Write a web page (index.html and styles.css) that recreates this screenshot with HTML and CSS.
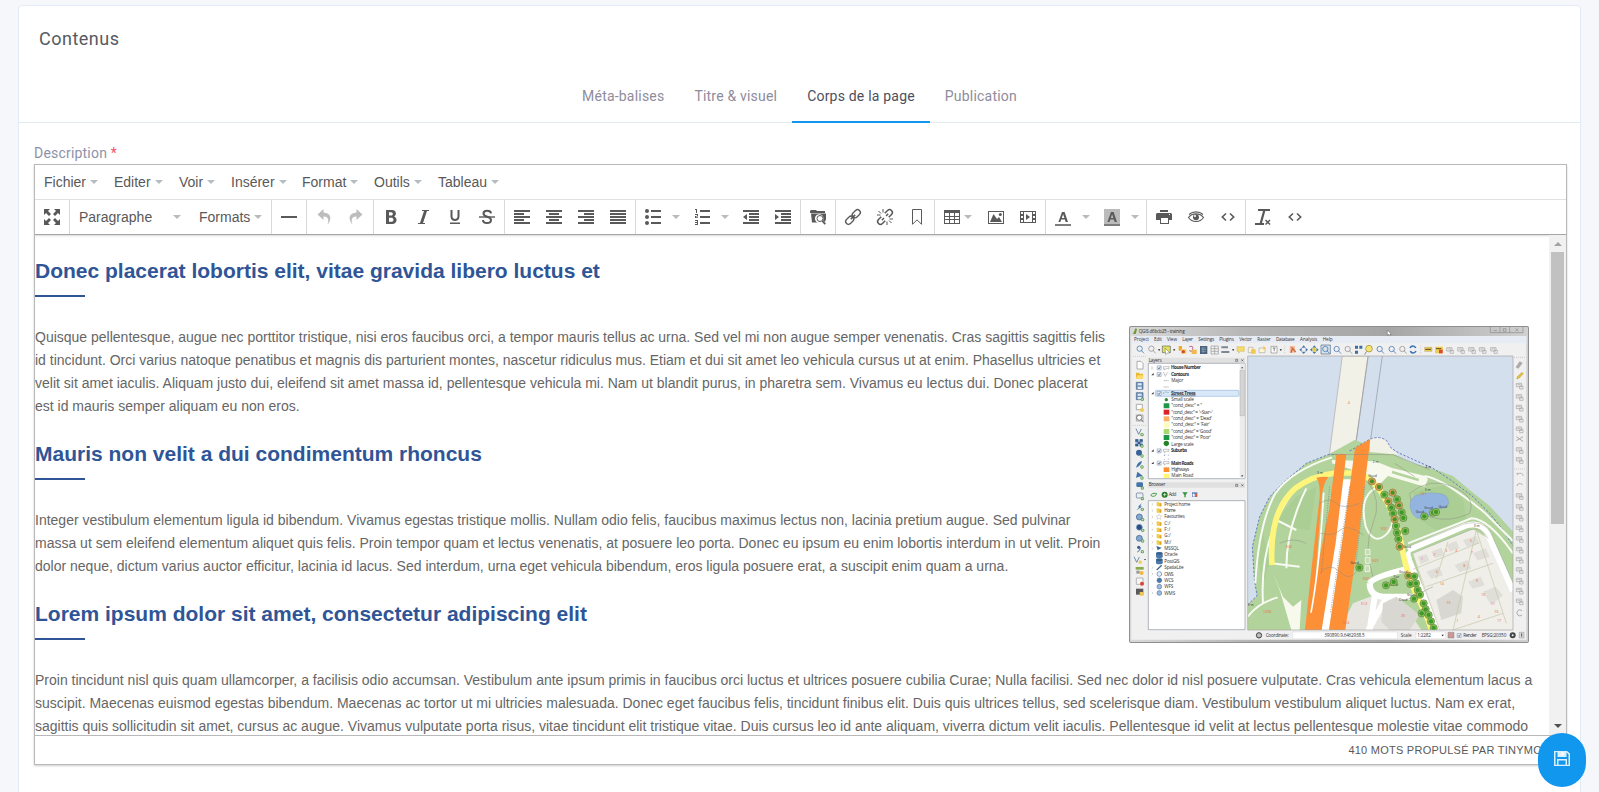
FILE: index.html
```html
<!DOCTYPE html>
<html lang="fr">
<head>
<meta charset="utf-8">
<title>Contenus</title>
<link rel="stylesheet" href="styles.css">
</head>
<body>
<main class="card">
  <header class="card-head">
    <h1 class="card-title">Contenus</h1>
    <nav class="tabs">
      <a class="tab">Méta-balises</a>
      <a class="tab">Titre &amp; visuel</a>
      <a class="tab active">Corps de la page</a>
      <a class="tab">Publication</a>
    </nav>
  </header>
  <section class="field">
    <label class="label">Description <span class="req">*</span></label>
    <div class="editor">
      <div class="menubar">
        <span class="menu m1">Fichier<i class="caret"></i></span>
        <span class="menu m2">Editer<i class="caret"></i></span>
        <span class="menu m3">Voir<i class="caret"></i></span>
        <span class="menu m4">Insérer<i class="caret"></i></span>
        <span class="menu m5">Format<i class="caret"></i></span>
        <span class="menu m6">Outils<i class="caret"></i></span>
        <span class="menu m7">Tableau<i class="caret"></i></span>
      </div>
      <div class="toolbar">
        <div class="group">
          <span class="btn"><svg class="ic" viewBox="0 0 16 16"><path d="M0 0h6L4 2l3 3-2 2-3-3-2 2zM16 0v6l-2-2-3 3-2-2 3-3-2-2zM0 16v-6l2 2 3-3 2 2-3 3 2 2zM16 16h-6l2-2-3-3 2-2 3 3 2-2z"/></svg></span>
        </div>
        <div class="group">
          <span class="listbox para">Paragraphe<i class="caret"></i></span>
          <span class="listbox formats">Formats<i class="caret"></i></span>
        </div>
        <div class="group">
          <span class="btn"><svg class="ic" viewBox="0 0 16 16"><path d="M0 7h16v2H0z"/></svg></span>
        </div>
        <div class="group off">
          <span class="btn"><svg class="ic" viewBox="0 0 16 16"><path d="M7.500 0L1.500 5.500l6 5.500V7.500c4-.3 6 2.500 4 8 5-5.500 3.500-11.700-4-12z"/></svg></span>
          <span class="btn"><svg class="ic" viewBox="0 0 16 16"><path d="M8.500 0l6 5.500-6 5.500V7.500c-4-.3-6 2.500-4 8-5-5.500-3.500-11.700 4-12z"/></svg></span>
        </div>
        <div class="group">
          <span class="btn"><svg class="ic" viewBox="0 0 16 16"><path fill-rule="evenodd" d="M3 1h6c4.500 0 5 5 2.200 6.500C15 9 14 15 9.500 15H3zM6 3.200v3.400h2.300c2 0 2-3.400 0-3.400zM6 8.800v4h2.800c2.200 0 2.200-4 0-4z"/></svg></span>
          <span class="btn"><svg class="ic" viewBox="0 0 16 16"><path d="M14 1v1h-2L8 14h2v1H3v-1h2L9 2H7V1z"/></svg></span>
          <span class="btn"><svg class="ic" viewBox="0 0 16 16"><path d="M3 13.500h10V15H3zM3.500 1h2v6.500c0 3.300 5 3.300 5 0V1h2v6.500c0 6-9 6-9 0z"/></svg></span>
          <span class="btn"><svg class="ic" viewBox="0 0 16 16"><path class="ln" stroke-width="2" d="M12 4.300C11.500 1 4.500 1 4.500 4.500c0 4 7.500 2.500 7.500 6.500 0 4-8 4-8 0"/><path d="M0 7.300h16v1.400H0z"/></svg></span>
        </div>
        <div class="group">
          <span class="btn"><svg class="ic" viewBox="0 0 16 16"><path d="M0 1h16v2H0zM0 4h10v2H0zM0 7h16v2H0zM0 10h10v2H0zM0 13h16v2H0z"/></svg></span>
          <span class="btn"><svg class="ic" viewBox="0 0 16 16"><path d="M0 1h16v2H0zM3 4h10v2H3zM0 7h16v2H0zM3 10h10v2H3zM0 13h16v2H0z"/></svg></span>
          <span class="btn"><svg class="ic" viewBox="0 0 16 16"><path d="M0 1h16v2H0zM6 4h10v2H6zM0 7h16v2H0zM6 10h10v2H6zM0 13h16v2H0z"/></svg></span>
          <span class="btn"><svg class="ic" viewBox="0 0 16 16"><path d="M0 1h16v2H0zM0 4h16v2H0zM0 7h16v2H0zM0 10h16v2H0zM0 13h16v2H0z"/></svg></span>
        </div>
        <div class="group">
          <span class="btn split"><svg class="ic" viewBox="0 0 16 16"><circle cx="2" cy="2" r="2"/><circle cx="2" cy="8" r="2"/><circle cx="2" cy="14" r="2"/><path d="M6 1h10v2H6zM6 7h10v2H6zM6 13h10v2H6z"/></svg><i class="caret"></i></span>
          <span class="btn split"><svg class="ic" viewBox="0 0 16 16"><path d="M6 1h10v2H6zM6 7h10v2H6zM6 13h10v2H6zM2 0h1v4H2V1H1V0zM1 5h3v2.500H2V8.200h2V9H1V7h2V6H1zM1 11h3v5H1v-1h2v-1H1v-1h2v-1H1z"/></svg><i class="caret"></i></span>
          <span class="btn"><svg class="ic" viewBox="0 0 16 16"><path d="M0 1h16v2H0zM6 4h10v2H6zM6 7h10v2H6zM6 10h10v2H6zM0 13h16v2H0zM4 5v6L0 8z"/></svg></span>
          <span class="btn"><svg class="ic" viewBox="0 0 16 16"><path d="M0 1h16v2H0zM6 4h10v2H6zM6 7h10v2H6zM6 10h10v2H6zM0 13h16v2H0zM0 5v6l4-3z"/></svg></span>
        </div>
        <div class="group">
          <span class="btn"><svg class="ic" viewBox="0 0 16 16"><path d="M0 2l1-1h5l1 1h8v2H0zM1 4.500h15V10l-1 3-2-1.500A4.300 4.300 0 1 0 8 13.600H2z"/><circle class="ln" cx="10" cy="9.500" r="3"/><path class="ln" stroke-width="1.800" d="M12.300 12l3 3.200"/></svg></span>
        </div>
        <div class="group">
          <span class="btn"><svg class="ic" viewBox="0 0 16 16"><g class="ln" stroke-width="1.300" transform="rotate(-45 8 8)"><rect x="-1.200" y="5.200" width="9.200" height="5.600" rx="2.800"/><rect x="8" y="5.200" width="9.200" height="5.600" rx="2.800"/><path d="M5 8h6" stroke-width="1.600"/></g></svg></span>
          <span class="btn"><svg class="ic" viewBox="0 0 16 16"><g class="ln" stroke-width="1.500" transform="rotate(-45 8 8)"><path d="M5.500 5.200H1.600a2.800 2.800 0 0 0 0 5.600h3.900M10.500 5.200h3.900a2.800 2.800 0 0 1 0 5.600h-3.900M3.500 8h3M9.500 8h3"/></g><path class="ln" d="M6 0v3.500M1.500 2L4 4.500M0 6h3.500M10 12.500V16M12 11.500l2.500 2.500M12.500 10H16"/></svg></span>
          <span class="btn"><svg class="ic" viewBox="0 0 16 16"><path class="ln" d="M3.500.5h9v14.800L8 10.800l-4.500 4.500z"/></svg></span>
        </div>
        <div class="group">
          <span class="btn drop"><svg class="ic" viewBox="0 0 16 16"><path fill-rule="evenodd" d="M0 1h16v14H0zM1 4v3h4V4zM6 4v3h4V4zM11 4v3h4V4zM1 8v2h4V8zM6 8v2h4V8zM11 8v2h4V8zM1 11v3h4v-3zM6 11v3h4v-3zM11 11v3h4v-3z"/></svg><i class="caret"></i></span>
          <span class="btn"><svg class="ic" viewBox="0 0 16 16"><path fill-rule="evenodd" d="M0 2h16v13H0zM1 3v11h14V3z"/><path d="M2 13l3.500-8L9 10l2-2 3 5z"/><circle cx="12.300" cy="5.500" r="1.500"/></svg></span>
          <span class="btn"><svg class="ic" viewBox="0 0 16 16"><path fill-rule="evenodd" d="M0 2h16v12H0zM1 3v2h2V3zM1 7v2h2V7zM1 11v2h2v-2zM4 3v10h8V3zM13 3v2h2V3zM13 7v2h2V7zM13 11v2h2v-2z"/><path d="M6 5v6l4-3z"/></svg></span>
        </div>
        <div class="group">
          <span class="btn split"><svg class="ic" viewBox="0 0 16 16"><path fill-rule="evenodd" d="M7 3h2.600L13 13h-2.300l-.8-2.400H6.200L5.400 13H3.400zM8.100 5.200L6.800 9h2.600z"/><path class="bar" d="M0 15h16v2H0z"/></svg><i class="caret"></i></span>
          <span class="btn split"><svg class="ic" viewBox="0 0 16 16"><path class="hl" d="M0 0h16v17H0z"/><path fill-rule="evenodd" d="M7 3h2.600L13 13h-2.300l-.8-2.400H6.200L5.400 13H3.400zM8.100 5.200L6.800 9h2.600z"/><path class="bar" d="M0 15h16v2H0z"/></svg><i class="caret"></i></span>
        </div>
        <div class="group">
          <span class="btn"><svg class="ic" viewBox="0 0 16 16"><path fill-rule="evenodd" d="M4 1h8v2H4zM0 5l1-1h14l1 1v6h-3v4H4v-4H0zM5 9v5h7V9zM13 5v1h1V5z"/></svg></span>
          <span class="btn"><svg class="ic" viewBox="0 0 16 16"><path class="ln" stroke-width="1.100" d="M.5 8.500C4 3.700 12 3.700 15.500 8.500 12 13.800 4 13.800.5 8.500zM1 5.500C5 2 11 2 15 5.500"/><circle cx="8" cy="8.300" r="3"/><circle cx="7" cy="7" r="1" fill="#fff"/></svg></span>
          <span class="btn"><svg class="ic" viewBox="0 0 16 16"><path class="ln" stroke-width="1.600" d="M6 4.500L2.300 8 6 11.500M10 4.500L13.700 8 10 11.500"/></svg></span>
        </div>
        <div class="group">
          <span class="btn"><svg class="ic" viewBox="0 0 16 16"><path d="M3 0h12v2H3zM8 2h2.300L7 14H4.700zM0 14h9v2H0z"/><path class="ln" stroke-width="1.500" d="M10.500 11l4.500 4.500M15 11l-4.500 4.500"/></svg></span>
          <span class="btn"><svg class="ic" viewBox="0 0 16 16"><path class="ln" stroke-width="1.600" d="M6 4.500L2.300 8 6 11.500M10 4.500L13.700 8 10 11.500"/></svg></span>
        </div>
      </div>
      <div class="edit-area">
        <article class="doc">
          <div class="row">
            <div class="prose">
              <h2>Donec placerat lobortis elit, vitae gravida libero luctus et</h2>
              <p>Quisque pellentesque, augue nec porttitor tristique, nisi eros faucibus orci, a tempor mauris tellus ac urna. Sed vel mi non augue semper venenatis. Cras sagittis sagittis felis<br>id tincidunt. Orci varius natoque penatibus et magnis dis parturient montes, nascetur ridiculus mus. Etiam et dui sit amet leo vehicula cursus ut at enim. Phasellus ultricies et<br>velit sit amet iaculis. Aliquam justo dui, eleifend sit amet massa id, pellentesque vehicula mi. Nam ut blandit purus, in pharetra sem. Vivamus eu lectus dui. Donec placerat<br>est id mauris semper aliquam eu non eros.</p>
              <h2>Mauris non velit a dui condimentum rhoncus</h2>
              <p>Integer vestibulum elementum ligula id bibendum. Vivamus egestas tristique mollis. Nullam odio felis, faucibus maximus lectus non, lacinia pretium augue. Sed pulvinar<br>massa ut sem eleifend elementum aliquet quis felis. Proin tempor quam et lectus venenatis, at posuere leo porta. Donec eu ipsum eu enim lobortis interdum in ut velit. Proin<br>dolor neque, dictum varius auctor efficitur, lacinia id lacus. Sed interdum, urna eget vehicula bibendum, eros ligula posuere erat, a suscipit enim quam a urna.</p>
              <h2>Lorem ipsum dolor sit amet, consectetur adipiscing elit</h2>
            </div>
            <svg class="shot" viewBox="28 18 1200 951" role="img">
              <defs>
                <linearGradient id="frame" x1="0" y1="0" x2="1" y2="0"><stop offset="0" stop-color="#d9d9d9"/><stop offset=".3" stop-color="#b5b5b5"/><stop offset=".65" stop-color="#a5a5a5"/><stop offset="1" stop-color="#d0d0d0"/></linearGradient>
                <clipPath id="mapclip"><path d="M384 108h796v822H384z"/></clipPath>
                <g id="tree"><circle r="11" fill="#8cc05c" stroke="#4b6e33" stroke-width="1.500"/><circle r="6.500" fill="#3d9a2a"/></g>
                <g id="otree"><circle r="11" fill="#d9a55c" stroke="#7a6330" stroke-width="1.500"/><circle r="6.500" fill="#46922a"/></g>
                <g id="db"><path d="M0 4h20v10H0z" fill="#4b77a9" /><ellipse cx="10" cy="4" rx="10" ry="4" fill="#35618f"/><ellipse cx="10" cy="14" rx="10" ry="4" fill="#4b77a9"/></g>
                <g id="plus"><circle r="5" fill="#4e9a3b"/><path d="M-3 0h6M0-3v6" stroke="#fff" stroke-width="1.500"/></g>
                <g id="mag" fill="none" stroke-width="2.500"><circle r="8"/><path d="M5 5l8 9"/></g>
                <g id="chk"><path d="M.5.500h12v12H.5z" fill="#eef3fa" stroke="#7f8b9c" stroke-width="1.500"/><path d="M3 6l3 4 4-7" fill="none" stroke="#2f4a84" stroke-width="2"/></g>
                <g id="fold"><path d="M0 2h6l2 2h6v11H0z" fill="#f1cb4c"/><path d="M9 6h5v9H9z" fill="#d8a62b"/></g>
                <g id="gt" fill="none" stroke="#a2a2a2" stroke-width="2"><path d="M1 3h16v10H1zM4 7h10M11 11h10v9H11z"/></g>
              </defs>
              <rect x="28" y="18" width="1200" height="951" rx="6" fill="#8f8f8f"/>
              <rect x="31" y="21" width="1194" height="945" rx="4" fill="url(#frame)"/>
              <path d="M35 48h1185v911H35z" fill="#f0f0f0"/>
              <path d="M35 48h1185v22H35z" fill="#e7ebf3"/>
              <path d="M40 42l8-18 4 4-4 14z" fill="#6d9a2f"/>
              <g class="st" font-size="14">
                <text x="57" y="38" textLength="138">QGIS d6bcb25 - training</text>
                <text x="43" y="64" textLength="45">Project</text><text x="103" y="64" textLength="24">Edit</text><text x="142" y="64" textLength="30">View</text><text x="188" y="64" textLength="32">Layer</text><text x="236" y="64" textLength="48">Settings</text><text x="299" y="64" textLength="44">Plugins</text><text x="359" y="64" textLength="38">Vector</text><text x="413" y="64" textLength="40">Raster</text><text x="469" y="64" textLength="56">Database</text><text x="541" y="64" textLength="52">Analysis</text><text x="609" y="64" textLength="30">Help</text>
              </g>
              <g fill="none" stroke="#777" stroke-width="1.500"><path d="M1112 21v17h98V21M1141 21v17M1170 21v17M1122 32h10M1151 26h8v8h-8zM1187 25l9 9M1196 25l-9 9"/></g>
              <path d="M803 31v15l4-3 3 5 3-2-3-4h5z" fill="#fff" stroke="#333"/>
              <!-- tool strip -->
              <g stroke="#4f7fb4"><use href="#mag" x="60" y="86"/><use href="#mag" x="651" y="87"/><use href="#mag" x="780" y="87"/><use href="#mag" x="816" y="87"/></g>
              <g stroke="#999"><use href="#mag" x="95" y="86"/><use href="#mag" x="684" y="87"/><use href="#mag" x="848" y="87"/></g>
              <path d="M604 75h28v27h-28z" fill="#d5e2f0" stroke="#51677f" stroke-width="2"/>
              <g stroke="#4f7fb4"><use href="#mag" x="617" y="87"/></g>
              <path d="M128 78h24v20h-24z" fill="#dfe25b" stroke="#666" stroke-width="2"/><path d="M136 84l14 14-7 1-5 5z" fill="#fff" stroke="#333"/>
              <path d="M177 78h10v14h-10z" fill="#f0a92f"/><path d="M184 88h16v13h-16z" fill="#f6d04b"/><circle cx="191" cy="95" r="5" fill="#d84838"/>
              <path d="M209 80c10-3 14 2 8 7 6 4-2 9-8 5" fill="none" stroke="#b34b8e" stroke-width="3"/><path d="M216 89h15v13h-15z" fill="#f2b948"/>
              <path d="M241 78h22v24h-22z" fill="#49617c"/><path d="M245 84h14M245 89h14M245 94h14M250 82v18" stroke="#dce6f0"/>
              <path d="M274 78h22v24h-22zM274 86h22M274 94h22M285 78v24" fill="none" stroke="#999" stroke-width="2"/>
              <path d="M305 82h20M305 96h24" stroke="#7b8794" stroke-width="6"/>
              <path d="M352 80h22v14h-12l-5 6v-6h-5z" fill="#f7db68" stroke="#b99a33"/>
              <path d="M386 82h14v16h-14zM418 84h18v14h-18z" fill="#fff5d5" stroke="#aaa" stroke-width="2"/><path d="M394 88h14v13h-14zM431 78l8 6-8 6z" fill="#f3c653"/>
              <path d="M454 79h18v20h-18z" fill="#fff" stroke="#888" stroke-width="2"/><path d="M459 84h9M463.500 84v10" stroke="#555" stroke-width="2"/>
              <path d="M115 88h7l-3.500 5zM160 88h7l-3.500 5zM337 88h7l-3.500 5zM480 88h7l-3.500 5z" fill="#222"/>
              <path d="M510 78h16v20h-16z" fill="#f7b99b"/><path d="M516 82l12 14M514 98l4-12" stroke="#c4693e" stroke-width="4"/>
              <path d="M552 76l6 7h-12zM552 102l6-7h-12zM539 89l7-6v12zM565 89l-7-6v12z" fill="#4777a8"/>
              <path d="M584 76l6 7h-12zM584 102l6-7h-12zM571 89l7-6v12zM597 89l-7-6v12z" fill="#4777a8"/><path d="M584 82l7 7-7 7-7-7z" fill="#e8c934"/>
              <path d="M706 77h9v9h-9zM719 77h9v9h-9zM706 92h9v9h-9z" fill="#3d6c9f"/><circle cx="748" cy="86" r="10" fill="#f5e56d" stroke="#8b8445" stroke-width="2"/><path d="M740 95l-5 9" stroke="#888" stroke-width="3"/>
              <path d="M871 84c4-8 14-8 17 0M889 93c-4 8-14 8-17 0" fill="none" stroke="#3673b6" stroke-width="5"/>
              <path d="M495 76v26M903 76v26" stroke="#c8c8c8" stroke-width="3" stroke-dasharray="2 3"/>
              <path d="M915 82h22v12h-22z" fill="#edc94d" stroke="#9e8944"/><path d="M946 80h24v20h-24z" fill="#f1cf55"/><path d="M958 89h11v11h-11z" fill="#dd4638"/><path d="M917 88h17M949 86h16" stroke="#5b4b1b" stroke-width="3"/>
              <use href="#gt" x="980" y="80"/><use href="#gt" x="1013" y="80"/><use href="#gt" x="1046" y="80"/><use href="#gt" x="1078" y="80"/><use href="#gt" x="1112" y="80"/>
              <!-- left tools -->
              <path d="M40 109h38M40 316h38M1184 112h32M1184 447h32" stroke="#b8b8b8" stroke-width="3" stroke-dasharray="2 4"/>
              <path d="M52 124h12l6 6v17H52z" fill="#fff" stroke="#888" stroke-width="2"/><path d="M49 158h8l3 3h10v15H49z" fill="#eab833"/><path d="M53 166h20l-4 10H49z" fill="#ffdc6c"/>
              <path d="M50 187h20v21H50zM50 218h20v21H50z" fill="#6d93bd" stroke="#47678d" stroke-width="2"/><path d="M54 190h12v6H54zM54 200h12v7H54zM54 221h12v6H54zM54 231h12v7H54z" fill="#e2ebf5"/>
              <path d="M50 253h18v16H50zM50 285h20v18H50z" fill="#fff" stroke="#888" stroke-width="2"/><circle cx="67" cy="270" r="6" fill="#f0ca52"/><g stroke="#666"><use href="#mag" x="59" y="293"/></g>
              <path d="M49 326l8 17 8-16" fill="none" stroke="#557799" stroke-width="2.500"/>
              <path d="M47 358h8v7h-8zM61 358h8v7h-8zM54 365h8v7h-8zM47 372h8v7h-8zM61 372h8v7h-8z" fill="#1c3c6e"/><path d="M47 358h22v21H47z" fill="#4977ab" opacity=".5"/>
              <circle cx="58" cy="398" r="9" fill="#38639a"/><path d="M49 443c3-12 9-18 18-20-2 10-7 16-18 20zM49 473l4-18 16 12z" fill="#3f72a8"/>
              <rect x="50" y="487" width="20" height="14" rx="4" fill="#4474a9"/><rect x="50" y="519" width="20" height="15" rx="3" fill="#eee" stroke="#56769c" stroke-width="2"/>
              <path d="M50 571l9-10-4-1 11-10-4 9 5 1z" fill="#4474a9"/>
              <circle cx="59" cy="591" r="9" fill="#83a8ce" stroke="#385e8c" stroke-width="2"/><circle cx="59" cy="622" r="9" fill="#294f80" stroke="#87a8cd" stroke-width="2"/><circle cx="59" cy="655" r="9" fill="#83a8ce" stroke="#385e8c" stroke-width="2"/>
              <circle cx="57" cy="682" r="5" fill="#38639a"/><path d="M62 683q0 9-9 13" fill="none" stroke="#38639a" stroke-width="3"/>
              <path d="M43 710l8 17 8-16" fill="none" stroke="#557799" stroke-width="2.500"/><path d="M57 722h9v9h-9z" fill="#f0ca52"/><path d="M73 717h6l-3 4z" fill="#222"/>
              <path d="M48 741h24v8H48z" fill="#8aa84c"/><path d="M50 752h10v9H50z" fill="#999"/><circle cx="66" cy="759" r="6" fill="#f0b83d"/>
              <path d="M50 774h20v19H50z" fill="#f6f6f6" stroke="#999" stroke-width="2"/><circle cx="67" cy="791" r="6" fill="#d84438"/>
              <path d="M49 806h22v18H49z" fill="#5a5a5a"/><path d="M60 816h12v11H60z" fill="#efc552"/>
              <use href="#plus" x="68" y="238"/><use href="#plus" x="67" y="344"/><use href="#plus" x="67" y="378"/><use href="#plus" x="67" y="408"/><use href="#plus" x="67" y="441"/><use href="#plus" x="67" y="474"/><use href="#plus" x="68" y="504"/><use href="#plus" x="68" y="536"/><use href="#plus" x="68" y="568"/><use href="#plus" x="69" y="599"/><use href="#plus" x="69" y="631"/><use href="#plus" x="69" y="663"/><use href="#plus" x="68" y="695"/>
              <!-- layers panel -->
              <path d="M86 113h290v16H86zM86 487h290v16H86z" fill="#e0e0e0"/>
              <path d="M86 130h290v346H86zM86 542h290v387H86z" fill="#fff" stroke="#8d949d" stroke-width="2"/>
              <path d="M360 131h15v344h-15z" fill="#ececec"/><path d="M361 151h13v136h-13z" fill="#d5d5d5" stroke="#999"/><path d="M364 145h7l-3.500-5zM364 466h7l-3.500 5z" fill="#444"/>
              <path d="M348 118h6v6h-6zM365 118l6 6M371 118l-6 6M348 493h6v6h-6zM365 493l6 6M371 493l-6 6" stroke="#333" stroke-width="1.500" fill="none"/>
              <rect x="107" y="211" width="251" height="18" rx="3" fill="#d8e8f9" stroke="#7da7d5" stroke-width="1.500"/>
              <use href="#chk" x="112" y="137"/><use href="#chk" x="112" y="157"/><use href="#chk" x="112" y="214"/><use href="#chk" x="112" y="386"/><use href="#chk" x="112" y="423"/>
              <path d="M96 140l5 4-5 4z" fill="none" stroke="#999"/><path d="M95 166h7v-7zM95 223h7v-7zM95 395h7v-7zM95 432h7v-7z" fill="#333"/>
              <path d="M131 140h17v6h-9l-5 4v-4h-3zM131 388h17v6h-9l-5 4v-4h-3zM131 425h17v6h-9l-5 4v-4h-3z" fill="none" stroke="#888" stroke-width="1.500"/>
              <path d="M131 156l6 13 6-12M132 182h15M132 201h15" fill="none" stroke="#999" stroke-width="2" stroke-dasharray="5 1"/>
              <path d="M132 217v4M139 214v4M145 216v3" stroke="#638a50" stroke-width="2"/><path d="M134 404h12v14h-12z" fill="none" stroke="#677bd0" stroke-width="2" stroke-dasharray="3 9"/>
              <circle cx="140" cy="239" r="5" fill="#2d8a2d"/><path d="M132 250h17v15h-17zM132 345h17v15h-17z" fill="#1f9648"/><path d="M132 269h17v15h-17z" fill="#dc2327"/><path d="M132 289h17v15h-17z" fill="#fbae63"/><path d="M132 308h17v15h-17z" fill="#fdfbb9"/><path d="M132 327h17v15h-17z" fill="#a7d96d"/>
              <path d="M138 370h4v9h-4z" fill="#5a4"/><circle cx="140" cy="370" r="8" fill="#238423"/><path d="M132 442h17v14h-17z" fill="#fd8f30"/><path d="M132 461h17v13h-17z" fill="#fff677"/>
              <g class="st" font-size="14">
                <text x="87" y="125" textLength="39">Layers</text><text x="87" y="499" textLength="50">Browser</text>
                <g font-weight="bold"><text x="154" y="148" textLength="90">House Number</text><text x="154" y="167" textLength="54">Contours</text><text x="154" y="224" textLength="74" text-decoration="underline">Street Trees</text><text x="154" y="396" textLength="48">Suburbs</text><text x="154" y="434" textLength="68">Main Roads</text></g>
                <text x="155" y="186" textLength="36">Major</text><text x="155" y="243" textLength="68">Small scale</text>
                <text x="155" y="262" textLength="92">"cond_desc" = ''</text><text x="155" y="281" textLength="124">"cond_desc" = '&lt;Star&gt;'</text><text x="155" y="300" textLength="122">"cond_desc" = 'Dead'</text><text x="155" y="319" textLength="115">"cond_desc" = 'Fair'</text><text x="155" y="338" textLength="122">"cond_desc" = 'Good'</text><text x="155" y="357" textLength="118">"cond_desc" = 'Poor'</text>
                <text x="155" y="377" textLength="67">Large scale</text><text x="155" y="453" textLength="54">Highways</text><text x="155" y="472" textLength="66">Main Road</text>
                <text x="147" y="528" textLength="23">Add</text>
                <text x="134" y="557" textLength="78">Project home</text><text x="134" y="576" textLength="34">Home</text><text x="134" y="595" textLength="61">Favourites</text><text x="134" y="614" textLength="18">C:/</text><text x="134" y="633" textLength="18">F:/</text><text x="134" y="652" textLength="19">G:/</text><text x="134" y="671" textLength="21">M:/</text><text x="134" y="690" textLength="44">MSSQL</text><text x="134" y="709" textLength="40">Oracle</text><text x="134" y="728" textLength="46">PostGIS</text><text x="134" y="748" textLength="58">SpatiaLite</text><text x="134" y="767" textLength="28">OWS</text><text x="134" y="786" textLength="28">WCS</text><text x="134" y="805" textLength="27">WFS</text><text x="134" y="824" textLength="33">WMS</text>
              </g>
              <path d="M94 528c0-8 6-8 14-8M110 519c0 10-6 10-14 10" fill="none" stroke="#3c9c3c" stroke-width="3"/><circle cx="135" cy="524" r="9" fill="#257a2c"/><path d="M130 524h10M135 519v10" stroke="#fff" stroke-width="2"/><path d="M188 517h16l-6 8v7h-4v-7z" fill="#2f9440"/><path d="M217 517h16v14h-16z" fill="#5276bb"/><path d="M219 521h6v9h-6z" fill="#fff"/><path d="M226 521h6v9h-6z" fill="#e76236"/>
              <use href="#fold" x="111" y="544"/><use href="#fold" x="111" y="563"/><use href="#fold" x="111" y="602"/><use href="#fold" x="111" y="621"/><use href="#fold" x="111" y="640"/><use href="#fold" x="111" y="659"/>
              <path d="M118 582l2.500 5 6 1-4 4 1 6-5.500-3-5.500 3 1-6-4-4 6-1z" fill="#fff" stroke="#999"/>
              <path d="M110 678l16 5-12 8z" fill="#3d6799"/><use href="#db" x="109" y="696"/><use href="#db" x="109" y="715"/><path d="M111 750l15-14" stroke="#3d6799" stroke-width="4"/>
              <g fill="#9dbbdc" stroke="#4b77a9" stroke-width="2"><circle cx="119" cy="762" r="7" fill="#e7f0fa"/><circle cx="119" cy="781" r="7" fill="#4b77a9"/><circle cx="119" cy="800" r="7"/><circle cx="119" cy="819" r="7"/></g>
              <g fill="none" stroke="#999" stroke-width="1.200"><path d="M96 549l4 4-4 4M96 568l4 4-4 4M96 587l4 4-4 4M96 606l4 4-4 4M96 625l4 4-4 4M96 644l4 4-4 4M96 663l4 4-4 4M96 682l4 4-4 4M96 739l4 4-4 4M96 758l4 4-4 4M96 815l4 4-4 4"/></g>
              <!-- map canvas -->
              <g clip-path="url(#mapclip)">
                <path d="M384 108h796v822H384z" fill="#d4dfee"/>
                <path d="M668 108h78l-37 258-80 38z" fill="#f1f1e7" stroke="#aaa" stroke-width="2"/><path d="M788 108l-35 250M745 108l-36 258" fill="none" stroke="#8f959b" stroke-width="2"/>
                <path d="M384 855l28-28-8-50-6-97 22-90 30-60 50-50 60-50 65-26 80-44 50 18 60 20 60 30 85 25 40 15 50 42 60 48 50 55 40 45v322H430l-46-42z" fill="#b3d39c"/>
                <path d="M750 357q27-12 50 4l15 24 22 19-87-8z" fill="#f1f1e7"/>
                <path d="M384 855l28-28-8-50-6-97 22-90 30-60 50-50 60-50 65-26h55M690 393l60-35q27-12 50 3l15 24 25 15 100 45 50 33 70 52 50 50 40 50 30 47" fill="none" stroke="#536bb9" stroke-width="2.500" stroke-dasharray="7 5"/>
                <path d="M470 600l60-70 60-30-20 130-80-10zM880 515l100-20 50 45 10 60-90 30-50-30zM430 640l20 90-20 60-15-70z" fill="#a4c98b" opacity=".5"/>
                <path d="M460 760l30 70 30 30 25-20-5 90h-25l-35-120z" fill="#f7f9ec"/>
                <path d="M637 420l130 4 50 20 100 24 8 10-10 22-110-32-30 30-20-30-118-38z" fill="#f7f9ec"/><path d="M818 452l80 24-2 8-80-24z" fill="#b3d39c"/>
                <path d="M700 850l65-25 80 15 60 90H660z" fill="#e6e5df"/><path d="M880 700l180-72 50 30 70 140v132H950z" fill="#efeee8"/>
                <path d="M865 690l170-72q50-16 70 25l75 170M873 700q-10 0-5 20l85 215M750 790q10-20 120-45M750 790q0 38 40 40h100M765 830l-15 100M800 832l-55 100" fill="none" stroke="#fff" stroke-width="18" stroke-linejoin="round"/>
                <path d="M873 677l160-65q55-15 80 25l67 150M880 700l170-70q35-12 55 25" fill="none" stroke="#aaa" stroke-width="1.500"/>
                <path d="M407 790q10-180 60-270 50-70 170-108M430 850q-12-200 95-340M500 745q0-120 60-240M780 500q-65 20-42 120 25 60 65 20 25-30 10-75M865 670l190-75q50 0 125 105M384 890q30-40 90-58M470 600l60 30M915 468q60 10 180 110l85 85M455 730l85 10" fill="none" stroke="#f8faf3" stroke-width="6"/>
                <path d="M457 735q-10-160 70-230 50-38 120-46h60q50 10 85 70 40 60 60 180 10 50 40 120 28 50 45 105" fill="none" stroke="#fdf57c" stroke-width="17"/>
                <path d="M648 478h48l-68 452h-25z" fill="#fff"/>
                <path d="M590 473q20-4 36-2-16 20-20 60l-16 210-14 189h-20l18-170 26-230q2-40-10-57z" fill="#fd9037"/><path d="M650 403l30-1-32 266-42 262h-50l40-200 32-160z" fill="#fd9037"/><path d="M612 518q-12 220-38 360" fill="none" stroke="#fff" stroke-width="5"/><path d="M706 384l46-27-38 313-37 260h-49l41-275z" fill="#fd9037"/>
                <path d="M630 500l-25 260M690 500l-58 380M735 500l-25 220" fill="none" stroke="#777" stroke-width="2" stroke-dasharray="3 4"/>
                <g fill="none" stroke="#8b9184" stroke-width="1.500"><path d="M600 550q30-20 50 0t70 0M602 640q40 10 60-10t70 15M600 760q30-35 60-5t50 0M870 520q60-50 130-20t50 80q-60 30-120 10t-60-70M740 480q50 60 20 130t0 160M480 670q40-20 80 0M630 403l190 1 110 45M825 430l60 40M860 840l80-40"/></g>
                <path d="M872 565q-5-30 20-40 40-10 60-5 35 0 35 30-5 20-35 15-20 30-60 30-15-10-20-30z" fill="#94b4e0" stroke="#7795bd"/>
                <path d="M790 850l40-20 45 35 25 20-30 45h-60l-25-25zM950 840l50-30 30 20-5 50-60 20z" fill="#d8d7d2"/>
                <g fill="#dfded8"><path d="M895 710l26-8 8 20-26 10zM935 695l30-12 9 22-28 10zM980 675l30-12 9 22-28 10zM1030 660l40-12 9 22-38 10zM920 755l38-15 12 26-36 10zM1005 735l38-15 12 26-36 10zM1060 700l38-15 12 26-36 10zM1045 785l38-15 12 26-36 10zM1090 815l38-15 22 26-36 30z"/></g>
                <path d="M880 748l200-80M920 800l200-70M1000 930l70-300M880 705l80 225M985 665l-35 110M1000 930l150-50M1070 630l90 280" fill="none" stroke="#c5c6ab" stroke-width="2"/>
                <path d="M737 688h14v17h-14zM737 712h14v18h-14zM736 737h14v18h-14z" fill="#c7dbb5" stroke="#fff" stroke-width="2"/>
                <g class="ft" font-size="11"><text x="684" y="252">4</text><text x="901" y="526">741</text><text x="498" y="684">504</text><text x="783" y="630">502</text><text x="757" y="727">503</text><text x="729" y="780">507</text><text x="724" y="855">512</text><text x="844" y="890">25</text><text x="430" y="879">1200</text><text x="670" y="911">514</text><text x="904" y="720">1</text><text x="941" y="709">2</text><text x="977" y="697">3</text><text x="1007" y="695">4</text><text x="1051" y="667">5</text><text x="1053" y="703">7</text><text x="1031" y="741">8</text><text x="948" y="759">6</text><text x="960" y="796">14</text><text x="1068" y="787">9</text><text x="1084" y="827">10</text><text x="980" y="851">15</text><text x="1114" y="856">11</text><text x="1124" y="879">16</text><text x="1074" y="895">4</text><text x="1010" y="906">1</text><text x="1132" y="905">17</text></g>
                <g class="st" font-size="10"><text x="592" y="462">3 m</text><text x="759" y="430">2 m</text><text x="917" y="445">4 m</text><text x="915" y="514">3 m</text><text x="1062" y="622">3 m</text><text x="384" y="857">5 m</text><text x="746" y="472">Good</text><text x="888" y="578">Good</text><text x="914" y="567">Good</text><text x="957" y="565">Good</text><text x="692" y="733">Good</text><text x="849" y="683">Good</text><text x="838" y="758">Good</text><text x="822" y="775">Fair</text><text x="810" y="799">Good</text><text x="838" y="843">Dead</text><text x="862" y="828">Good</text></g>
                <use href="#otree" x="757" y="484"/><use href="#otree" x="778" y="501"/><use href="#tree" x="794" y="524"/><use href="#otree" x="819" y="518"/><use href="#otree" x="806" y="544"/><use href="#tree" x="832" y="538"/><use href="#tree" x="815" y="563"/><use href="#otree" x="838" y="556"/><use href="#tree" x="846" y="577"/><use href="#tree" x="820" y="580"/><use href="#otree" x="825" y="598"/><use href="#tree" x="851" y="594"/><use href="#tree" x="829" y="618"/><use href="#tree" x="832" y="638"/><use href="#tree" x="857" y="633"/><use href="#tree" x="836" y="657"/><use href="#otree" x="840" y="680"/>
                <use href="#tree" x="914" y="589"/><use href="#tree" x="940" y="578"/><use href="#tree" x="949" y="576"/><use href="#tree" x="719" y="743"/><use href="#tree" x="799" y="796"/><use href="#tree" x="822" y="786"/><use href="#otree" x="866" y="767"/><use href="#tree" x="884" y="769"/><use href="#tree" x="872" y="792"/><use href="#tree" x="889" y="790"/><use href="#tree" x="894" y="810"/><use href="#tree" x="901" y="824"/><use href="#tree" x="883" y="836"/><use href="#tree" x="912" y="850"/><use href="#tree" x="918" y="868"/><use href="#tree" x="906" y="880"/><use href="#tree" x="927" y="885"/><use href="#tree" x="934" y="904"/><use href="#tree" x="942" y="924"/>
              </g>
              <path d="M384 108h796v822H384z" fill="none" stroke="#a5a5a5" stroke-width="2"/>
              <!-- right tools -->
              <path d="M1188 142l12-18 9 5-13 17z" fill="#aaa"/><path d="M1191 177l3-8 13-12 4 4-12 13z" fill="#e5c23f" stroke="#9b812b"/>
              <use href="#gt" x="1189" y="187"/><use href="#gt" x="1189" y="221"/><use href="#gt" x="1189" y="253"/><use href="#gt" x="1189" y="286"/><use href="#gt" x="1189" y="318"/><path d="M1190 350l20 14M1190 362l20-12" stroke="#aaa" stroke-width="3"/><use href="#gt" x="1189" y="380"/><use href="#gt" x="1189" y="410"/>
              <path d="M1210 467c0-10-15-8-17-3l-1-6M1192 498c0-10 15-8 17-3" fill="none" stroke="#aaa" stroke-width="3"/>
              <use href="#gt" x="1189" y="518"/><use href="#gt" x="1189" y="551"/><use href="#gt" x="1189" y="583"/><use href="#gt" x="1189" y="615"/><use href="#gt" x="1189" y="647"/><use href="#gt" x="1189" y="679"/><use href="#gt" x="1189" y="709"/><use href="#gt" x="1189" y="740"/><use href="#gt" x="1189" y="772"/><use href="#gt" x="1189" y="802"/><use href="#gt" x="1189" y="834"/><path d="M1207 872a9 9 0 1 0 0 13" fill="none" stroke="#aaa" stroke-width="3"/>
              <!-- status bar -->
              <path d="M518 936h315v20H518zM889 936h88v20h-88z" fill="#fff" stroke="#ccc"/>
              <circle cx="418" cy="946" r="8" fill="#bbb" stroke="#444" stroke-width="3"/><path d="M985 937h18v17h-18z" fill="#c99" stroke="#666"/><path d="M965 944h8l-4 5z" fill="#222"/><use href="#chk" x="1012" y="940"/><circle cx="1179" cy="946" r="9" fill="#444"/><circle cx="1179" cy="946" r="3" fill="#eee"/><path d="M1199 937h14v17h-14z" fill="#ddd" stroke="#666"/><path d="M1206 940v10" stroke="#555" stroke-width="3"/>
              <g class="st" font-size="14"><text x="438" y="950" textLength="69">Coordinate:</text><text x="614" y="950" textLength="121">390890.9,6462938.5</text><text x="843" y="950" textLength="33">Scale</text><text x="893" y="950" textLength="41">1:2282</text><text x="1031" y="950" textLength="40">Render</text><text x="1086" y="950" textLength="74">EPSG:20350</text></g>
            </svg>
          </div>
          <p class="last">Proin tincidunt nisl quis quam ullamcorper, a facilisis odio accumsan. Vestibulum ante ipsum primis in faucibus orci luctus et ultrices posuere cubilia Curae; Nulla facilisi. Sed nec dolor id nisl posuere vulputate. Cras vehicula elementum lacus a<br>suscipit. Maecenas euismod egestas bibendum. Maecenas ac tortor ut mi ultricies malesuada. Donec eget faucibus felis, tincidunt finibus elit. Duis quis ultrices tellus, sed scelerisque diam. Vestibulum vestibulum aliquet luctus. Nam ex erat,<br>sagittis quis sollicitudin sit amet, cursus ac augue. Vivamus vulputate porta risus, vitae tincidunt elit tristique vitae. Duis cursus leo id ante aliquam, viverra dictum velit iaculis. Pellentesque id velit at lectus pellentesque molestie vitae commodo</p>
        </article>
        <div class="scroll"><i class="up"></i><div class="thumb"></div><i class="down"></i></div>
      </div>
      <footer class="status">410 MOTS PROPULSÉ PAR TINYMCE</footer>
    </div>
  </section>
</main>
<button class="fab" aria-label="Enregistrer"><svg class="save" viewBox="0 0 16 15"><path fill="#fff" fill-opacity=".85" fill-rule="evenodd" d="M0 0h13l3 2.500V15H0zM1.500 1.300v12.400H3V8h10v5.700h1.500V3.200L12.500 1.500V6H3.500V1.300zM4.500 9.500v4.200h7V9.500z"/><path fill="#fff" d="M7.500 1.300h2v3h-2z"/></svg></button>
</body>
</html>
```
FILE: styles.css
```css
* { box-sizing: border-box; }
body { margin: 0; height: 792px; overflow: hidden; background: #f5f7fb; font-family: Roboto, sans-serif; padding: 5px 18px 0; }
.card { height: 800px; background: #fff; border: 1px solid #e2eaf6; border-radius: 4px; }
.card-head { height: 117px; border-bottom: 1px solid #e2eaf1; display: flex; flex-direction: column; justify-content: space-between; }
.card-title { margin: 21px 0 0 20px; font-size: 18px; line-height: 24px; font-weight: 400; letter-spacing: .5px; color: #575962; }
.tabs { display: flex; justify-content: center; margin-bottom: -1px; }
.tab { height: 53px; padding: 16px 15px 0; font-size: 14px; line-height: 20px; letter-spacing: .2px; color: #8e8c9c; border-bottom: 2px solid transparent; }
.tab.active { color: #4d4f5c; border-color: #1197ee; }
.field { padding: 20px 13px 0 15px; }
.label { display: block; height: 21px; font-size: 14px; line-height: 20px; color: #8d93a8; letter-spacing: .2px; }
.req { color: #f4516c; }
.editor { height: 601px; border: 1px solid #b9b9b9; box-shadow: 0 1px 2px rgba(0,0,0,.2); display: flex; flex-direction: column; font-family: "Liberation Sans", Arial, sans-serif; font-size: 14px; color: #595959; }
.menubar { flex: none; height: 35px; padding-left: 1px; border-bottom: 1px solid #e0e0e0; display: flex; align-items: center; }
.menu { display: flex; align-items: center; padding: 0 8px; white-space: nowrap; }
.m1 { width: 70px; } .m2 { width: 65px; } .m3 { width: 52px; } .m4 { width: 71px; } .m5 { width: 72px; } .m6 { width: 64px; } .m7 { width: 80px; }
.caret { flex: none; width: 0; height: 0; margin-left: 4px; border: 4px solid transparent; border-top-color: #b5bcc2; border-bottom: 0; }
.toolbar { flex: none; height: 35px; border-bottom: 1px solid #a6a6a6; display: flex; }
.group { display: flex; align-items: center; padding: 0 1px; border-left: 1px solid #d9d9d9; }
.group:first-child { border-left: 0; }
.btn { width: 32px; height: 32px; padding: 0 8px; display: flex; align-items: center; }
.split { width: 49px; }
.drop { width: 44px; }
.split .caret { margin-left: 11px; }
.off .ic { fill: #bdbdbd; }
.ic { flex: none; width: 16px; height: 16px; fill: #595959; overflow: visible; }
.ln { fill: none; stroke: #595959; }
.bar { fill: #7d7d7d; }
.hl { fill: #bbb; }
.listbox { display: flex; align-items: center; padding: 0 10px 0 8px; }
.para { width: 120px; justify-content: space-between; }
.formats { width: 79px; }
.edit-area { flex: 1; min-height: 0; display: flex; box-shadow: inset 0 2px 2px -1px rgba(0,0,0,.15); }
.doc { flex: 1; min-width: 0; overflow: hidden; padding-top: 21px; line-height: 23px; color: #666; }
.row { display: flex; justify-content: space-between; }
.doc h2 { margin: 0 0 29px; height: 41px; font-size: 21px; line-height: 30px; color: #2f5597; white-space: nowrap; }
.doc h2::after { content: ""; display: block; width: 50px; height: 2px; margin-top: 9px; background: #2f5597; }
.doc p { margin: 0 0 21px; white-space: nowrap; }
.shot { flex: none; width: 400px; height: 317px; margin: 70px 20px 0 0; }
.doc .last { margin-top: 0; }
.st { font-family: "Open Sans", sans-serif; fill: #333; }
.ft { font-family: "Open Sans", sans-serif; fill: #e9663c; }
.scroll { flex: none; width: 17px; background: #f1f1f1; display: flex; flex-direction: column; align-items: center; }
.up { margin: 7px 0 6px; border: 4px solid transparent; border-top: 0; border-bottom-color: #a3a3a3; }
.thumb { width: 13px; height: 272px; background: #c1c1c1; }
.down { margin-top: auto; margin-bottom: 7px; border: 4px solid transparent; border-bottom: 0; border-top-color: #505050; }
.status { flex: none; height: 29px; border-top: 1px solid #b9b9b9; padding: 8px 17px 0 0; text-align: right; font-size: 11px; line-height: 13px; letter-spacing: .25px; white-space: nowrap; }
.fab { position: fixed; left: 1538px; top: 733px; width: 48px; height: 54px; border: 0; border-radius: 24px; background: #1197ee; display: flex; align-items: center; justify-content: center; padding: 0 1px 4px 0; }
.save { width: 16px; height: 15px; }
```
